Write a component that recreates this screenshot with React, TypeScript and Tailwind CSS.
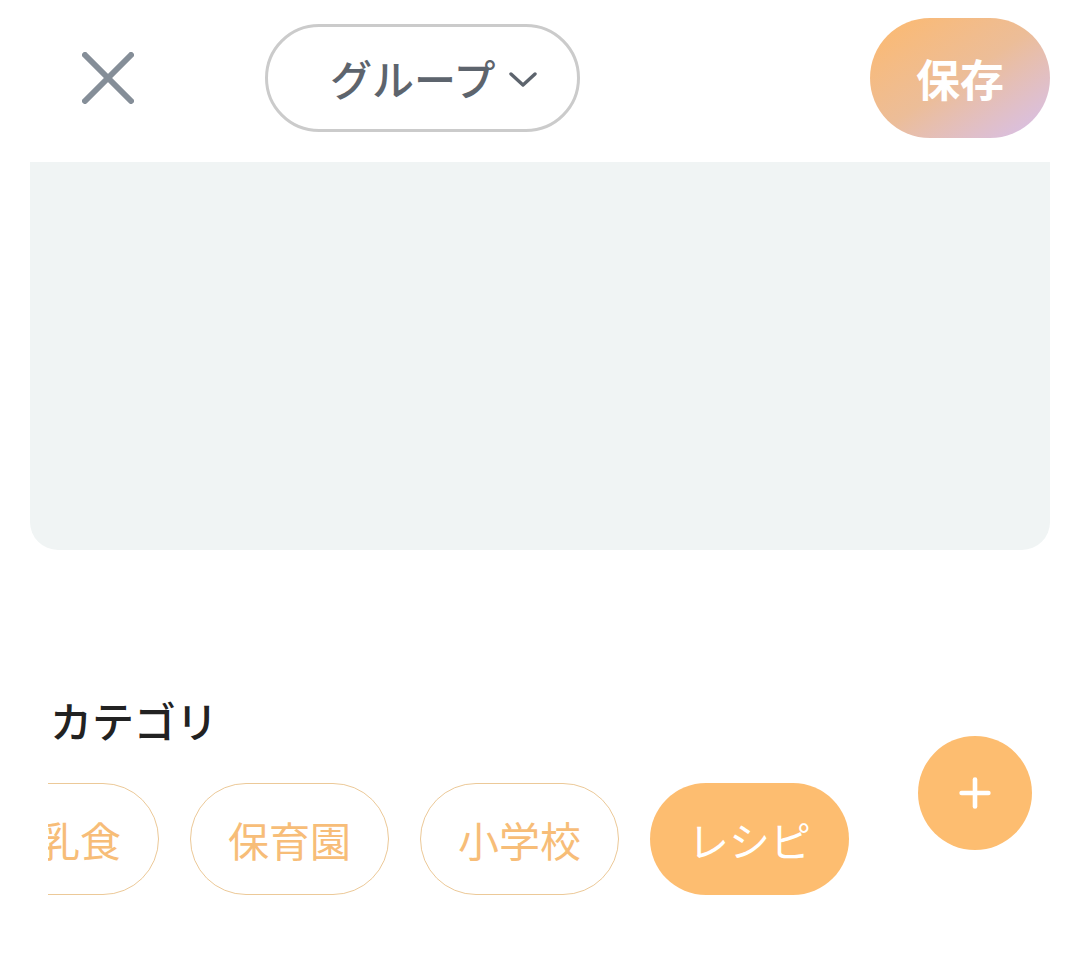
import { Plus } from 'lucide-react'

const categories = [
  { id: 'weaning', label: '離乳食', active: false },
  { id: 'nursery', label: '保育園', active: false },
  { id: 'school', label: '小学校', active: false },
  { id: 'recipe', label: 'レシピ', active: true },
]

export default function App() {
  return (
    <div
      className="min-h-[953px] w-[1080px] bg-white"
      style={{ fontFamily: '"Noto Sans CJK JP", "Noto Sans", sans-serif' }}
    >
      {/* Header */}
      <div className="flex h-[156px] items-center">
        <button type="button" className="ml-[82px] flex h-[52px] w-[52px] items-center justify-center">
          <svg viewBox="0 0 52 52" className="h-[52px] w-[52px]" fill="none" stroke="#858e98" strokeWidth="6" strokeLinecap="round">
            <line x1="3" y1="3" x2="49" y2="49" />
            <line x1="49" y1="3" x2="3" y2="49" />
          </svg>
        </button>

        <button
          type="button"
          className="ml-[131px] flex h-[108px] items-center gap-[14px] rounded-full border-[3px] border-[#cbcbcb] pl-[62px] pr-[40px]"
        >
          <span className="text-[42px] font-medium leading-none text-[#5d646d]">グループ</span>
          <svg viewBox="0 0 28 16" className="mt-[4px] h-[16px] w-[28px]" fill="none" stroke="#5d646d" strokeWidth="3.4" strokeLinecap="round" strokeLinejoin="round">
            <polyline points="2,2 14,13 26,2" />
          </svg>
        </button>

        <div className="flex-1" />

        <button
          type="button"
          className="mr-[30px] flex h-[120px] w-[180px] items-center justify-center rounded-full bg-gradient-to-br from-[#fdb96c] via-[#ecbd98] to-[#d6bfee] text-[44px] font-bold text-white"
        >
          保存
        </button>
      </div>

      {/* Content area */}
      <div className="mx-[30px] mt-[6px] h-[388px] rounded-b-[28px] bg-[#f0f4f4]" />

      {/* Category section */}
      <div className="relative mt-[146px]">
        <h2 className="ml-[50px] text-[42px] font-medium leading-[48px] text-[#222222]">カテゴリ</h2>

        <div className="ml-[48px] mt-[39px] w-[852px] overflow-hidden">
          <div className="-ml-[88px] flex gap-[31px]">
            {categories.map((c) => (
              <div
                key={c.id}
                className={`flex h-[112px] w-[199px] shrink-0 items-center justify-center rounded-full text-[41px] leading-none ${
                  c.active ? 'bg-[#fdbd70] text-white' : 'border border-[#ecc998] text-[#f7bd78]'
                }`}
              >
                {c.label}
              </div>
            ))}
          </div>
        </div>

        <button
          type="button"
          className="absolute left-[918px] top-[40px] flex h-[114px] w-[114px] items-center justify-center rounded-full bg-[#fdbd70]"
        >
          <Plus className="h-[46px] w-[46px] text-white" strokeWidth={2.4} />
        </button>
      </div>
    </div>
  )
}
